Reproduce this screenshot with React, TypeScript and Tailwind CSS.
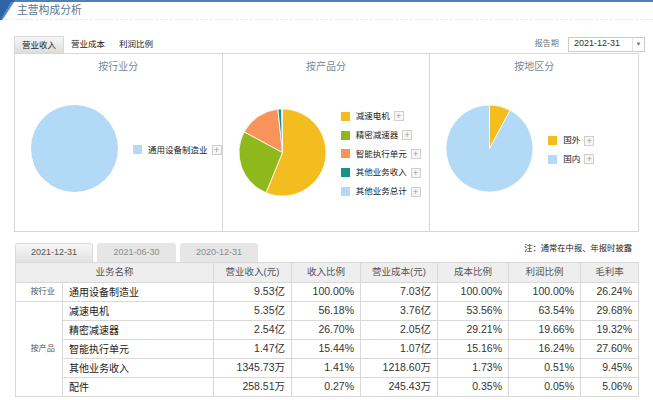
import React from 'react';

type Slice = { label: string; value: number; color: string };

const slicePath = (cx: number, cy: number, r: number, a0: number, a1: number) => {
  const pt = (a: number) => [cx + r * Math.sin(a), cy - r * Math.cos(a)];
  const [x0, y0] = pt(a0);
  const [x1, y1] = pt(a1);
  const large = a1 - a0 > Math.PI ? 1 : 0;
  return `M${cx},${cy} L${x0},${y0} A${r},${r} 0 ${large} 1 ${x1},${y1} Z`;
};

const Pie: React.FC<{ slices: Slice[]; r?: number }> = ({ slices, r = 43.5 }) => {
  const total = slices.reduce((s, x) => s + x.value, 0);
  const size = r * 2 + 2;
  const c = size / 2;
  let acc = 0;
  if (slices.length === 1) {
    return (
      <svg width={size} height={size} className="shrink-0">
        <circle cx={c} cy={c} r={r} fill={slices[0].color} />
      </svg>
    );
  }
  return (
    <svg width={size} height={size} className="shrink-0">
      {slices.map((s) => {
        const a0 = (acc / total) * Math.PI * 2;
        acc += s.value;
        const a1 = (acc / total) * Math.PI * 2;
        return <path key={s.label} d={slicePath(c, c, r, a0, a1)} fill={s.color} stroke="#fff" strokeWidth={0.8} />;
      })}
    </svg>
  );
};

const Legend: React.FC<{ slices: Slice[] }> = ({ slices }) => (
  <div className="flex flex-col mt-[3px]">
    {slices.map((s) => (
      <div key={s.label} className="flex items-center h-[18.8px]">
        <span className="w-[9px] h-[9px] shrink-0" style={{ backgroundColor: s.color }} />
        <span className="ml-[6px] text-[8.5px] text-[#222] whitespace-nowrap">{s.label}</span>
        <span className="ml-[4px] w-[10px] h-[10px] border border-[#cfcfcf] bg-[#f6f6f6] text-[#999] text-[9px] leading-[8px] flex items-center justify-center">+</span>
      </div>
    ))}
  </div>
);

const LBLUE = '#b2d9f6';
const YELLOW = '#f4bd1f';

const panels: { title: string; slices: Slice[] }[] = [
  { title: '按行业分', slices: [{ label: '通用设备制造业', value: 100, color: LBLUE }] },
  {
    title: '按产品分',
    slices: [
      { label: '减速电机', value: 56.18, color: YELLOW },
      { label: '精密减速器', value: 26.7, color: '#8eb81c' },
      { label: '智能执行单元', value: 15.44, color: '#f8945a' },
      { label: '其他业务收入', value: 1.41, color: '#16928b' },
      { label: '其他业务总计', value: 0.27, color: LBLUE },
    ],
  },
  {
    title: '按地区分',
    slices: [
      { label: '国外', value: 7.9, color: YELLOW },
      { label: '国内', value: 92.1, color: LBLUE },
    ],
  },
];

const headers = ['营业收入(元)', '收入比例', '营业成本(元)', '成本比例', '利润比例', '毛利率'];

const groups: { cat: string; rows: string[][] }[] = [
  { cat: '按行业', rows: [['通用设备制造业', '9.53亿', '100.00%', '7.03亿', '100.00%', '100.00%', '26.24%']] },
  {
    cat: '按产品',
    rows: [
      ['减速电机', '5.35亿', '56.18%', '3.76亿', '53.56%', '63.54%', '29.68%'],
      ['精密减速器', '2.54亿', '26.70%', '2.05亿', '29.21%', '19.66%', '19.32%'],
      ['智能执行单元', '1.47亿', '15.44%', '1.07亿', '15.16%', '16.24%', '27.60%'],
      ['其他业务收入', '1345.73万', '1.41%', '1218.60万', '1.73%', '0.51%', '9.45%'],
      ['配件', '258.51万', '0.27%', '245.43万', '0.35%', '0.05%', '5.06%'],
    ],
  },
];

const colWidths = [47, 151, 78, 69, 77, 71, 72, 58];

export default function App() {
  return (
    <div className="w-[653px] h-[400px] overflow-hidden bg-white relative font-['Liberation_Sans','Noto_Sans_CJK_SC',sans-serif] text-[#333]">
      {/* title bar */}
      <div className="h-[2px] bg-[#4f80b8]" />
      <svg width="16" height="20" className="absolute left-0 top-0">
        <polygon points="0,0 15,0 2,20 0,20" fill="#2f64a6" />
        <polygon points="11,2 14,2 3,19 1,19" fill="#5d8cc4" />
      </svg>
      <div className="h-[18px] flex items-center pl-[17px] border-b border-dashed border-[#e4eaf1]">
        <span className="text-[10.8px] text-[#5d7690] leading-none">主营构成分析</span>
      </div>

      {/* tabs + report period */}
      <div className="flex items-end justify-between pl-[14px] pr-[8px] mt-[16px] h-[17px]">
        <div className="flex items-end h-full text-[8.5px]">
          <div className="h-full px-[7px] flex items-center bg-linear-to-b from-[#f6f6f6] to-[#dddddd] border border-b-0 border-[#d9d9d9] text-[#222]">营业收入</div>
          <div className="h-full px-[7px] flex items-center text-[#222]">营业成本</div>
          <div className="h-full px-[7px] flex items-center text-[#222]">利润比例</div>
        </div>
        <div className="flex items-center h-full pb-[1px]">
          <span className="text-[8.2px] text-[#777]">报告期</span>
          <div className="ml-[9px] w-[77px] h-[15px] border border-[#cccccc] flex items-center justify-between">
            <span className="pl-[5px] text-[9px] text-[#333]">2021-12-31</span>
            <span className="w-[12px] h-full border-l border-[#e3e3e3] flex items-center justify-center text-[6px] text-[#777]">▼</span>
          </div>
        </div>
      </div>

      {/* pie panels */}
      <div className="ml-[14px] w-[625px] h-[179px] border border-[#d6d6d6] flex divide-x divide-[#d6d6d6]">
        {panels.map((p) => (
          <div key={p.title} className="w-[208px] flex flex-col">
            <div className="h-[24px] flex items-center justify-center text-[10px] text-[#7d8791]">{p.title}</div>
            <div className="flex items-center pl-[15px] pt-[26px]">
              <Pie slices={p.slices} />
              <div className="ml-[14px]">
                <Legend slices={p.slices} />
              </div>
            </div>
          </div>
        ))}
      </div>

      {/* period tabs + note */}
      <div className="ml-[15px] w-[623px] mt-[10px] flex items-end justify-between h-[20px]">
        <div className="flex items-end gap-[4px] h-full">
          <div className="w-[78px] h-[19px] rounded-t-[3px] bg-linear-to-b from-[#f7f7f7] to-[#e2e2e2] border border-b-0 border-[#dadada] flex items-center justify-center text-[9px] text-[#555]">2021-12-31</div>
          <div className="w-[79px] h-[19px] rounded-t-[3px] bg-[#e6e6e6] flex items-center justify-center text-[9px] text-[#8a8a8a]">2021-06-30</div>
          <div className="w-[78px] h-[19px] rounded-t-[3px] bg-[#e6e6e6] flex items-center justify-center text-[9px] text-[#8a8a8a]">2020-12-31</div>
        </div>
        <span className="self-start mr-[6px] text-[8.3px] text-[#222]">注：通常在中报、年报时披露</span>
      </div>

      {/* table */}
      <table className="ml-[15px] w-[623px] border-collapse table-fixed">
        <colgroup>
          {colWidths.map((w, i) => (
            <col key={i} style={{ width: w }} />
          ))}
        </colgroup>
        <thead>
          <tr className="h-[20px] bg-[#eeeeee]">
            <th colSpan={2} className="border border-[#d9d9d9] font-normal text-[9.5px] text-[#555]">业务名称</th>
            {headers.map((h) => (
              <th key={h} className="border border-[#d9d9d9] font-normal text-[9.5px] text-[#555]">{h}</th>
            ))}
          </tr>
        </thead>
        <tbody>
          {groups.map((g) =>
            g.rows.map((r, ri) => (
              <tr key={g.cat + r[0]} className="h-[19px]">
                {ri === 0 && (
                  <td rowSpan={g.rows.length} className="border border-[#d9d9d9] text-right pr-[7px] text-[8.2px] text-[#555]">{g.cat}</td>
                )}
                <td className="border border-[#d9d9d9] pl-[6px] text-[10px] text-[#222]">{r[0]}</td>
                {r.slice(1).map((v, vi) => (
                  <td key={vi} className="border border-[#d9d9d9] text-right pr-[6px] text-[10.5px] text-[#333]">{v}</td>
                ))}
              </tr>
            ))
          )}
        </tbody>
      </table>
    </div>
  );
}
